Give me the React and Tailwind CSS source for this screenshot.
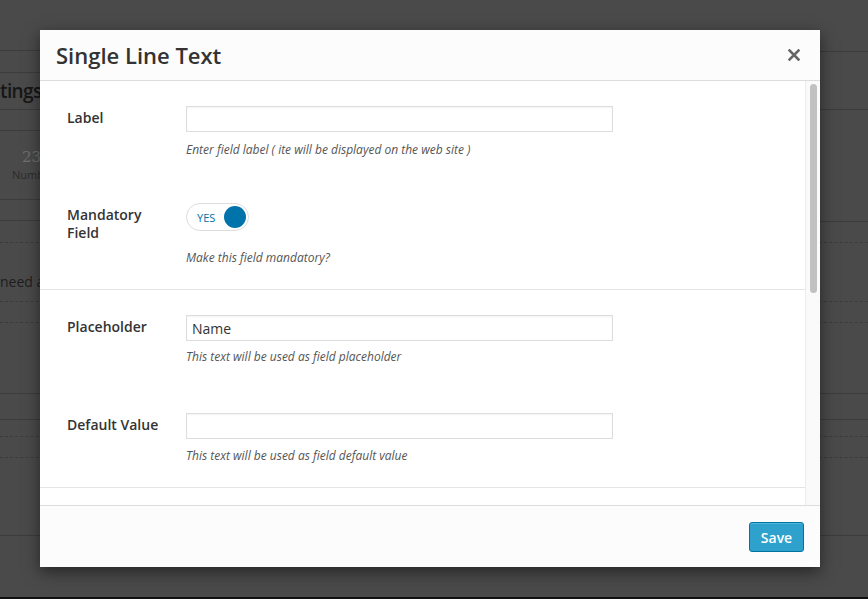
import React from 'react';

const font = { fontFamily: '"Open Sans", "Noto Sans", sans-serif' };

function Line({ dashed }) {
  return <div className={`h-0 border-t ${dashed ? 'border-dashed' : ''} border-[#3c3c3c]`} />;
}

function Background() {
  return (
    <div className="flex h-[599px] w-full flex-col bg-[#4a4a4a]" style={font}>
      <div className="flex flex-1">
        {/* left column of the page behind */}
        <div className="flex w-[140px] flex-col">
          <div className="h-[50px]" />
          <Line />
          <div className="h-[21px]" />
          <Line />
          <div className="flex h-[36px] items-center text-[19px] font-semibold tracking-[-0.6px] text-[#161616]">tings</div>
          <Line />
          <div className="h-[20px]" />
          <Line />
          <div className="flex h-[68px] flex-col items-start pl-[22px] pt-[15px] text-[#6f6f6f]">
            <span className="text-[15px] leading-[22px]" style={{ fontFamily: '"DejaVu Serif", serif' }}>23</span>
            <span className="-ml-[10px] text-[11px] leading-[14px] text-[#2a2a2a]">Numbers</span>
          </div>
          <Line />
          <div className="h-[20px]" />
          <Line />
          <div className="h-[21px]" />
          <Line dashed />
          <div className="flex h-[58px] items-end pb-[9px] text-[14px] text-[#1e1e1e]">need a</div>
          <Line dashed />
          <div className="h-[20px]" />
          <Line dashed />
          <div className="h-[70px]" />
          <Line />
          <div className="h-[25px]" />
          <Line />
          <div className="h-[16px]" />
          <Line dashed />
          <div className="h-[20px]" />
          <Line dashed />
          <div className="h-[77px]" />
          <Line />
        </div>
        <div className="flex-1" />
        {/* right column */}
        <div className="flex w-[100px] flex-col">
          <div className="h-[51px]" />
          <Line />
          <div className="h-[57px]" />
          <Line />
          <div className="h-[111px]" />
          <Line />
          <div className="h-[20px]" />
          <Line dashed />
          <div className="h-[58px]" />
          <Line dashed />
          <div className="h-[20px]" />
          <Line dashed />
          <div className="h-[70px]" />
          <Line />
          <div className="h-[25px]" />
          <Line />
          <div className="h-[16px]" />
          <Line dashed />
          <div className="h-[20px]" />
          <Line dashed />
          <div className="h-[77px]" />
          <Line />
        </div>
      </div>
      <div className="h-[2px] bg-[#111]" />
    </div>
  );
}

function Field({ label, children, hint, hintGap = 'mt-[9px]' }) {
  return (
    <div className="flex">
      <div className="w-[119px] shrink-0 pt-[3px] text-[14px] font-semibold leading-[18px] text-[#333]">{label}</div>
      <div className="flex flex-col">
        {children}
        <p className={`${hintGap} text-[12px] italic leading-[18px] text-[#555]`}>{hint}</p>
      </div>
    </div>
  );
}

function TextInput({ value }) {
  return (
    <div className="flex h-[26px] w-[427px] items-center border border-[#ddd] bg-white px-[5px] text-[14px] text-[#333] shadow-[inset_0_1px_2px_rgba(0,0,0,0.05)]">
      {value}
    </div>
  );
}

function Toggle() {
  return (
    <div className="flex h-[28px] w-[63px] items-center justify-between rounded-full border border-[#ddd] bg-white pl-[10px] pr-[2px]">
      <span className="text-[11px] leading-none text-[#0073aa]">YES</span>
      <span className="h-[22px] w-[22px] rounded-full bg-[#0073aa]" />
    </div>
  );
}

function Modal() {
  return (
    <div
      className="absolute left-[40px] top-[30px] flex h-[537px] w-[780px] flex-col bg-white shadow-[0_5px_15px_rgba(0,0,0,0.5)]"
      style={font}
    >
      <div className="flex h-[51px] shrink-0 items-center justify-between border-b border-[#ddd] bg-[#fcfcfc] pl-[16px] pr-[20px]">
        <h2 className="text-[22px] font-semibold text-[#333]">Single Line Text</h2>
        <svg width="12" height="12" viewBox="0 0 12 12" className="text-[#666]">
          <path d="M1.5 1.5 L10.5 10.5 M10.5 1.5 L1.5 10.5" stroke="currentColor" strokeWidth="2.6" strokeLinecap="square" />
        </svg>
      </div>

      <div className="flex h-[424px] shrink-0">
        <div className="flex w-[765px] flex-col">
          <div className="border-b border-[#e5e5e5] px-[27px] pb-[22px] pt-[25px]">
            <Field label="Label" hint="Enter field label ( ite will be displayed on the web site )">
              <TextInput />
            </Field>
            <div className="h-[44px]" />
            <Field label={<>Mandatory<br />Field</>} hint="Make this field mandatory?" hintGap="mt-[18px]">
              <Toggle />
            </Field>
          </div>
          <div className="border-b border-[#e5e5e5] px-[27px] pb-[22px] pt-[25px]">
            <Field label="Placeholder" hint="This text will be used as field placeholder" hintGap="mt-[7px]">
              <TextInput value="Name" />
            </Field>
            <div className="h-[47px]" />
            <Field label="Default Value" hint="This text will be used as field default value" hintGap="mt-[8px]">
              <TextInput />
            </Field>
          </div>
        </div>
        <div className="flex w-[15px] justify-center border-l border-[#ececec] bg-[#fafafa] pt-[3px]">
          <div className="h-[209px] w-[7px] rounded-full bg-[#c1c1c1]" />
        </div>
      </div>

      <div className="flex flex-1 items-start justify-end border-t border-[#ddd] bg-[#fcfcfc] pr-[16px] pt-[16px]">
        <button className="h-[30px] w-[55px] rounded-[3px] border border-[#0074a2] bg-[#2ea2cc] text-[14px] font-semibold text-white shadow-[inset_0_1px_0_rgba(120,200,230,0.5)]">
          Save
        </button>
      </div>
    </div>
  );
}

export default function App() {
  return (
    <div className="relative h-[599px] w-full overflow-hidden">
      <Background />
      <Modal />
    </div>
  );
}
